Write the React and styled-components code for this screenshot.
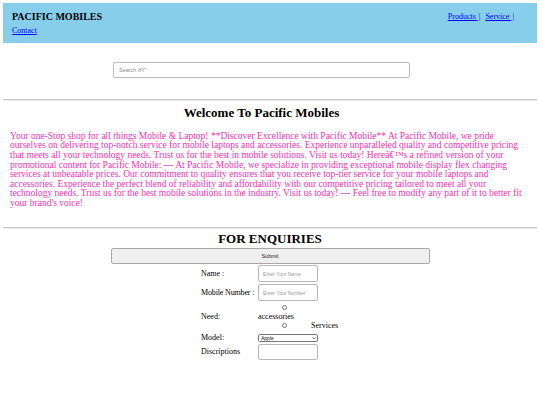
import React from 'react';
import styled, { createGlobalStyle } from 'styled-components';

const GlobalStyle = createGlobalStyle`
  body {
    margin: 3px;
    font-family: "Liberation Serif", "Times New Roman", serif;
    background: #fff;
  }
`;

const Header = styled.header`
  background: #87ceeb;
  height: 40px;
  padding: 8px 9px 0 9px;
  box-sizing: border-box;
`;

const TopRow = styled.div`
  display: flex;
  justify-content: space-between;
  align-items: center;
`;

const Brand = styled.h3`
  margin: 0;
  font-size: 10px;
  font-weight: bold;
`;

const Nav = styled.nav`
  display: flex;
  gap: 5px;
  margin-right: 14px;
  font-size: 8px;
`;

const NavLink = styled.a`
  color: blue;
  text-decoration: underline;
`;

const Sep = styled.span`
  color: blue;
  margin-left: 1px;
`;

const ContactLink = styled(NavLink)`
  display: block;
  width: fit-content;
  margin-top: 4px;
  font-size: 8px;
  line-height: 10px;
`;

const SearchWrap = styled.div`
  display: flex;
  justify-content: center;
  padding: 19px 17px 21px 0;
`;

const SearchInput = styled.input`
  width: 297px;
  height: 16px;
  box-sizing: border-box;
  border: 1px solid #bdbdbd;
  border-radius: 2px;
  padding: 0 5px;
  font-family: "Liberation Sans", Arial, sans-serif;
  font-size: 5.5px;
  &::placeholder { color: #888; }
`;

const Rule = styled.hr`
  margin: 0;
  border: none;
  border-top: 1px solid #c8c8c8;
  border-bottom: 1px solid #eee;
`;

const Title = styled.h2`
  margin: ${p => p.$top}px 0 ${p => p.$bottom}px;
  padding-right: ${p => p.$shift || 0}px;
  text-align: center;
  font-size: ${p => p.$size}px;
  font-weight: bold;
  line-height: 1.15;
`;

const Promo = styled.p`
  margin: 0 0 19px;
  padding: 0 7px;
  color: #f032b4;
  font-size: 9.5px;
  line-height: 9.55px;
`;

const SubmitButton = styled.button`
  display: block;
  width: 319px;
  height: 16px;
  margin: 0 auto 1px;
  background: #efefef;
  border: 1px solid #a8a8a8;
  border-radius: 2px;
  font-family: "Liberation Sans", Arial, sans-serif;
  font-size: 5.5px;
  color: #222;
`;

const Form = styled.form`
  display: grid;
  grid-template-columns: 57px 81px;
  width: 138px;
  margin: 0 auto;
  font-size: 8px;
  align-items: center;
  row-gap: 2px;
`;

const Label = styled.label`
  white-space: nowrap;
  align-self: ${p => p.$align || 'center'};
  margin-top: ${p => p.$mt || 0}px;
  letter-spacing: ${p => p.$tight ? '-0.15px' : 'normal'};
`;

const TextInput = styled.input`
  width: 60px;
  height: 17px;
  box-sizing: border-box;
  border: 1px solid #b8b8b8;
  border-radius: 2px;
  padding: 0 4px;
  font-family: "Liberation Sans", Arial, sans-serif;
  font-size: 5px;
  &::placeholder { color: #999; }
`;

const NeedBox = styled.div`
  display: flex;
  flex-direction: column;
  line-height: 9px;
`;

const RadioLine = styled.div`
  display: flex;
  align-items: center;
  height: 9px;
`;

const Radio = styled.input`
  width: 5px;
  height: 5px;
  margin: 0 0 0 24px;
`;

const RadioText = styled.span`
  margin-left: ${p => p.$ml || 0}px;
`;

const SelectWrap = styled.div`
  position: relative;
  width: 60px;
  height: 8px;
  margin-top: 2px;
`;

const Select = styled.select`
  appearance: none;
  display: block;
  width: 60px;
  height: 8px;
  box-sizing: border-box;
  padding: 0 0 0 2px;
  font-family: "Liberation Sans", Arial, sans-serif;
  font-size: 5px;
  line-height: 6px;
  background: #fff;
  color: #111;
  border: 1px solid #767676;
  border-radius: 1.5px;
`;

const Chevron = styled.svg`
  position: absolute;
  right: 2px;
  top: 2px;
  width: 4px;
  height: 4px;
  pointer-events: none;
`;

const TextArea = styled.textarea`
  width: 60px;
  height: 16px;
  box-sizing: border-box;
  border: 1px solid #b8b8b8;
  border-radius: 2px;
  resize: none;
`;

const promoText = "Your one-Stop shop for all things Mobile & Laptop! **Discover Excellence with Pacific Mobile** At Pacific Mobile, we pride ourselves on delivering top-notch service for mobile laptops and accessories. Experience unparalleled quality and competitive pricing that meets all your technology needs. Trust us for the best in mobile solutions. Visit us today! Hereâ€™s a refined version of your promotional content for Pacific Mobile: --- At Pacific Mobile, we specialize in providing exceptional mobile display flex changing services at unbeatable prices. Our commitment to quality ensures that you receive top-tier service for your mobile laptops and accessories. Experience the perfect blend of reliability and affordability with our competitive pricing tailored to meet all your technology needs. Trust us for the best mobile solutions in the industry. Visit us today! --- Feel free to modify any part of it to better fit your brand's voice!";

const App = () => {
  return (
    <>
      <GlobalStyle />
      <Header>
        <TopRow>
          <Brand>PACIFIC MOBILES</Brand>
          <Nav>
            <span><NavLink href="#">Products </NavLink><Sep>|</Sep></span>
            <span><NavLink href="#">Service </NavLink><Sep>|</Sep></span>
          </Nav>
        </TopRow>
        <ContactLink href="#">Contact</ContactLink>
      </Header>
      <SearchWrap>
        <SearchInput placeholder="Search ðŸ”" />
      </SearchWrap>
      <Rule />
      <Title $size={13} $top={5} $bottom={11} $shift={17}>Welcome To Pacific Mobiles</Title>
      <Promo>{promoText}</Promo>
      <Rule />
      <Title $size={13} $top={3} $bottom={1}>FOR ENQUIRIES</Title>
      <SubmitButton type="button">Submit</SubmitButton>
      <Form onSubmit={e => e.preventDefault()}>
        <Label>Name :</Label>
        <TextInput placeholder="Enter Your Name" />
        <Label $tight>Mobile Number :</Label>
        <TextInput placeholder="Enter Your Number" />
        <Label>Need:</Label>
        <NeedBox>
          <RadioLine><Radio type="radio" name="need" /></RadioLine>
          <span>accessories</span>
          <RadioLine><Radio type="radio" name="need" /><RadioText $ml={24}>Services</RadioText></RadioLine>
        </NeedBox>
        <Label>Model:</Label>
        <SelectWrap>
          <Select defaultValue="Apple">
            <option>Apple</option>
            <option>Samsung</option>
            <option>Dell</option>
          </Select>
          <Chevron viewBox="0 0 10 10">
            <path d="M1.5 3.5 L5 7 L8.5 3.5" fill="none" stroke="#111" strokeWidth="1.8" />
          </Chevron>
        </SelectWrap>
        <Label $align="start" $mt={3}>Discriptions</Label>
        <TextArea />
      </Form>
    </>
  );
};

export default App;
